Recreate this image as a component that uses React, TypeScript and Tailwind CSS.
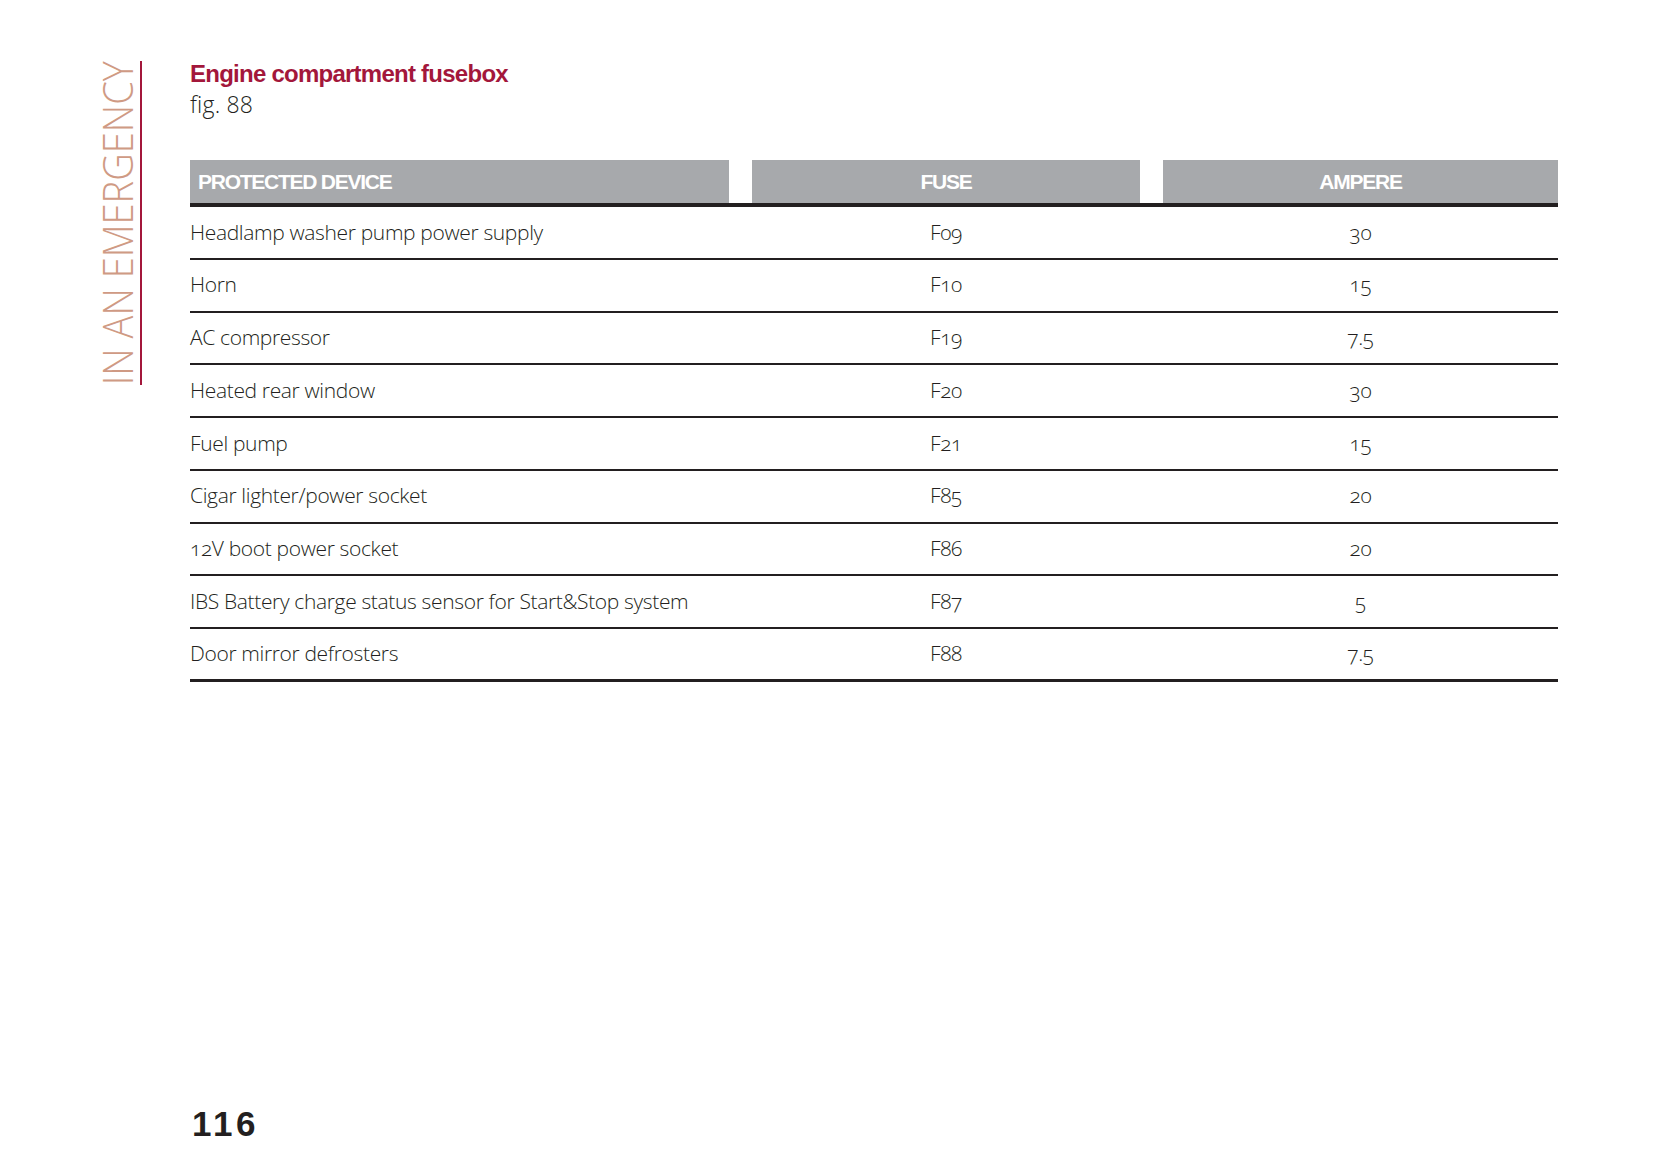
import React from "react";

const rows: [string, string, string][] = [
  ["Headlamp washer pump power supply", "F09", "30"],
  ["Horn", "F10", "15"],
  ["AC compressor", "F19", "7.5"],
  ["Heated rear window", "F20", "30"],
  ["Fuel pump", "F21", "15"],
  ["Cigar lighter/power socket", "F85", "20"],
  ["12V boot power socket", "F86", "20"],
  ["IBS Battery charge status sensor for Start&Stop system", "F87", "5"],
  ["Door mirror defrosters", "F88", "7.5"],
];

export default function App() {
  return (
    <div className="w-[1653px] h-[1167px] bg-white flex text-[#231f20] overflow-hidden">
      {/* Sidebar */}
      <aside className="w-[190px] shrink-0 pt-[61px] pl-[96px] flex items-start">
        <div className="w-[40px] h-[324px] flex items-center justify-center">
          <span
            className="[writing-mode:vertical-rl] rotate-180 scale-y-[0.885] whitespace-nowrap text-[43px] leading-none font-light text-[#cf9a84]"
            style={{ fontFamily: '"Open Sans", sans-serif' }}
          >
            IN AN EMERGENCY
          </span>
        </div>
        <div className="w-[1.5px] h-[324px] ml-[4px] bg-[#a3173b]" />
      </aside>

      {/* Main */}
      <main className="flex-1 flex flex-col pt-[62px]">
        <h1
          className="text-[24px] leading-none font-bold tracking-[-0.75px] text-[#a3173b]"
          style={{ fontFamily: '"Liberation Sans", Arial, sans-serif' }}
        >
          Engine compartment fusebox
        </h1>
        <p
          className="mt-[7px] text-[23px] leading-none font-light tracking-[0.2px]"
          style={{ fontFamily: '"Open Sans", sans-serif' }}
        >
          fig. 88
        </p>

        <div className="mt-[44px] w-[1368px]">
          <div
            className="grid grid-cols-[539px_388px_395px] gap-x-[23px] border-b-4 border-[#231f20] text-white text-[21px] font-bold tracking-[-1.25px]"
            style={{ fontFamily: '"Liberation Sans", Arial, sans-serif' }}
          >
            <div className="h-[43px] bg-[#a7a9ac] flex items-center pl-[8px]">PROTECTED DEVICE</div>
            <div className="h-[43px] bg-[#a7a9ac] flex items-center justify-center">FUSE</div>
            <div className="h-[43px] bg-[#a7a9ac] flex items-center justify-center">AMPERE</div>
          </div>
          {rows.map(([dev, fuse, amp], i) => (
            <div
              key={fuse}
              className={`grid grid-cols-[539px_388px_395px] gap-x-[23px] h-[52.75px] items-center border-[#231f20] text-[21px] font-light tracking-[-0.35px] oldstyle-nums ${
                i === rows.length - 1 ? "border-b-[3px]" : "border-b-2"
              }`}
              style={{ fontFamily: '"Open Sans", sans-serif' }}
            >
              <div className="whitespace-nowrap">{dev}</div>
              <div className="text-center">{fuse}</div>
              <div className="text-center">{amp}</div>
            </div>
          ))}
        </div>

        <div
          className="mt-auto pb-[26px] pl-[2px] text-[35px] leading-none font-bold tracking-[3.5px]"
          style={{ fontFamily: '"Liberation Sans", Arial, sans-serif' }}
        >
          116
        </div>
      </main>
    </div>
  );
}
